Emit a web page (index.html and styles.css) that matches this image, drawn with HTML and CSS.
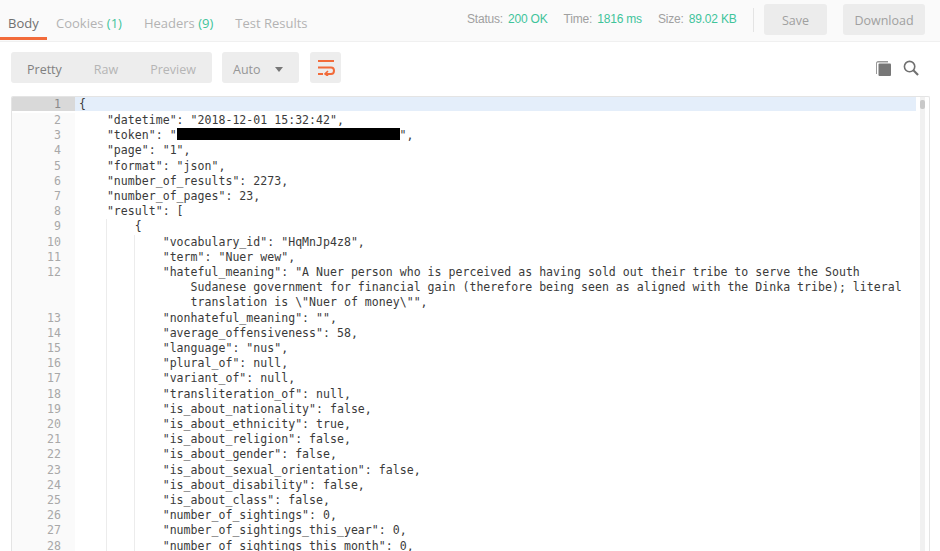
FILE: index.html
```html
<!DOCTYPE html>
<html lang="en">
<head>
<meta charset="utf-8">
<title>Response</title>
<link rel="stylesheet" href="styles.css">
</head>
<body>
<div class="page">
  <header class="topbar">
    <nav class="tabs">
      <span class="tab active">Body</span>
      <span class="tab">Cookies <em>(1)</em></span>
      <span class="tab">Headers <em>(9)</em></span>
      <span class="tab">Test Results</span>
    </nav>
    <div class="meta">
      <span class="stat">Status: <b>200 OK</b></span>
      <span class="stat">Time: <b>1816 ms</b></span>
      <span class="stat">Size: <b>89.02 KB</b></span>
      <span class="divider"></span>
      <button class="btn save">Save</button>
      <button class="btn download">Download</button>
    </div>
  </header>
  <section class="toolbar">
    <div class="group">
      <span class="mode on">Pretty</span>
      <span class="mode">Raw</span>
      <span class="mode">Preview</span>
    </div>
    <div class="select"><span>Auto</span><i class="caret"></i></div>
    <div class="wrap">
      <svg width="18" height="17" viewBox="0 0 18 17" fill="none" stroke="#f26b3a" stroke-width="2">
        <path d="M1 2H17"/>
        <path d="M1 8.500H14C18 8.500 18 15 14 15H8"/>
        <path d="M1 15H6"/>
        <path d="M11 12L8 15L11 17" stroke-width="1.600"/>
      </svg>
    </div>
    <div class="tools">
      <svg width="17" height="17" viewBox="0 0 17 17">
        <path d="M3 1H13V2.500H3C2.500 2.500 2 3 2 3.500V14H1V3C1 2 2 1 3 1Z" fill="#9a9a9a"/>
        <rect x="3.500" y="3.500" width="12.500" height="12.500" rx="1" fill="#777"/>
      </svg>
      <svg width="16" height="16" viewBox="0 0 17 17" fill="none" stroke="#707070" stroke-width="1.700">
        <circle cx="7" cy="7" r="5.500"/>
        <path d="M11 11L16 16" stroke-width="2.200"/>
      </svg>
    </div>
  </section>
  <section class="editor">
    <div class="rows">
      <div class="row current"><span class="num">1</span><pre class="code">{</pre></div>
      <div class="row"><span class="num">2</span><pre class="code">    "datetime": "2018-12-01 15:32:42",</pre></div>
      <div class="row"><span class="num">3</span><pre class="code">    "token": "<span class="redact">xxxxxxxxxxxxxxxxxxxxxxxxxxxxxxxx</span>",</pre></div>
      <div class="row"><span class="num">4</span><pre class="code">    "page": "1",</pre></div>
      <div class="row"><span class="num">5</span><pre class="code">    "format": "json",</pre></div>
      <div class="row"><span class="num">6</span><pre class="code">    "number_of_results": 2273,</pre></div>
      <div class="row"><span class="num">7</span><pre class="code">    "number_of_pages": 23,</pre></div>
      <div class="row"><span class="num">8</span><pre class="code">    "result": [</pre></div>
      <div class="row"><span class="num">9</span><pre class="code g1">        {</pre></div>
      <div class="row"><span class="num">10</span><pre class="code g2">            "vocabulary_id": "HqMnJp4z8",</pre></div>
      <div class="row"><span class="num">11</span><pre class="code g2">            "term": "Nuer wew",</pre></div>
      <div class="row"><span class="num">12</span><pre class="code g2">            "hateful_meaning": "A Nuer person who is perceived as having sold out their tribe to serve the South
                Sudanese government for financial gain (therefore being seen as aligned with the Dinka tribe); literal
                translation is \"Nuer of money\"",</pre></div>
      <div class="row"><span class="num">13</span><pre class="code g2">            "nonhateful_meaning": "",</pre></div>
      <div class="row"><span class="num">14</span><pre class="code g2">            "average_offensiveness": 58,</pre></div>
      <div class="row"><span class="num">15</span><pre class="code g2">            "language": "nus",</pre></div>
      <div class="row"><span class="num">16</span><pre class="code g2">            "plural_of": null,</pre></div>
      <div class="row"><span class="num">17</span><pre class="code g2">            "variant_of": null,</pre></div>
      <div class="row"><span class="num">18</span><pre class="code g2">            "transliteration_of": null,</pre></div>
      <div class="row"><span class="num">19</span><pre class="code g2">            "is_about_nationality": false,</pre></div>
      <div class="row"><span class="num">20</span><pre class="code g2">            "is_about_ethnicity": true,</pre></div>
      <div class="row"><span class="num">21</span><pre class="code g2">            "is_about_religion": false,</pre></div>
      <div class="row"><span class="num">22</span><pre class="code g2">            "is_about_gender": false,</pre></div>
      <div class="row"><span class="num">23</span><pre class="code g2">            "is_about_sexual_orientation": false,</pre></div>
      <div class="row"><span class="num">24</span><pre class="code g2">            "is_about_disability": false,</pre></div>
      <div class="row"><span class="num">25</span><pre class="code g2">            "is_about_class": false,</pre></div>
      <div class="row"><span class="num">26</span><pre class="code g2">            "number_of_sightings": 0,</pre></div>
      <div class="row"><span class="num">27</span><pre class="code g2">            "number_of_sightings_this_year": 0,</pre></div>
      <div class="row"><span class="num">28</span><pre class="code g2">            "number_of_sightings_this_month": 0,</pre></div>
    </div>
    <div class="scroll"><span class="thumb"></span></div>
  </section>
</div>
</body>
</html>
```
FILE: styles.css
```css
* { box-sizing: border-box; }
html, body { margin: 0; height: 100%; overflow: hidden; background: #fff; }
.page { width: 940px; height: 551px; overflow: hidden; font-family: "Open Sans", sans-serif; color: #808080; }

.topbar { height: 42px; display: flex; justify-content: space-between; background: #fafafa; border-bottom: 1px solid #f0f0f0; }
.tabs { display: flex; align-items: flex-start; }
.tab { height: 40px; padding-top: 15px; font-size: 13px; line-height: 17px; color: #b3b3b3; white-space: nowrap; margin-right: 22px; }
.tab em { font-style: normal; color: #3fc49a; }
.tab.active { color: #707070; width: 47px; padding-left: 8px; margin-right: 9px; border-bottom: 3px solid #f26b3a; }
.meta { display: flex; align-items: flex-start; padding: 4px 15px 0 0; }
.stat { font-family: "Liberation Sans", sans-serif; font-size: 12px; line-height: 31px; color: #a0a0a0; margin-right: 16px; letter-spacing: -0.200px; white-space: nowrap; }
.stat b { font-weight: 400; color: #3fc49a; margin-left: 2px; }
.divider { width: 1px; height: 24px; margin: 4px 10px 0 0.500px; background: #e4e4e4; }
.btn { height: 31px; border: 0; border-radius: 3px; background: #ececec; color: #a0a0a0; font-family: "Open Sans", sans-serif; font-size: 12.500px; padding: 2px 0 0; }
.save { width: 63px; margin-right: 16px; }
.download { width: 82px; }

.toolbar { height: 54px; padding: 10px 21px 0 11px; display: flex; align-items: flex-start; }
.group { width: 201px; height: 31px; display: flex; background: #ededed; border-radius: 3px; padding: 2px 0 0 16px; }
.mode { font-size: 12.500px; line-height: 31px; color: #b5b5b5; margin-right: 32px; }
.mode.on { color: #808080; }
.select { width: 77px; height: 31px; margin-left: 10px; padding: 3px 0 0 11px; background: #ededed; border-radius: 3px; display: flex; align-items: center; font-size: 12.500px; color: #969696; }
.caret { margin-left: 14px; width: 0; height: 0; border-left: 4.500px solid transparent; border-right: 4.500px solid transparent; border-top: 5px solid #777; }
.wrap { width: 31px; height: 31px; margin-left: 11px; background: #ededed; border-radius: 3px; display: flex; align-items: center; justify-content: center; }
.tools { margin-left: auto; display: flex; gap: 11px; padding-top: 8px; }

.editor { margin-left: 11px; width: 919px; height: 460px; display: flex; border: 1px solid #e4e4e4; border-bottom: 0; border-radius: 2px 2px 0 0; overflow: hidden; }
.rows { width: 904px; flex: none; }
.row { display: flex; }
.num { width: 63px; flex: none; padding-right: 14px; text-align: right; background: #fafafa; color: #a8a8a8; font-family: "DejaVu Sans Mono", monospace; font-size: 11.550px; line-height: 15.200px; }
.code { margin: 0; flex: 1; padding-left: 4px; font-family: "DejaVu Sans Mono", monospace; font-size: 11.550px; line-height: 15.200px; letter-spacing: 0.020px; color: #3a3a3a; white-space: pre; }
.current { height: 14.200px; margin-bottom: 1.800px; }
.current .num { background: #d9d9d9; color: #8a8a8a; }
.current .code { background: #e4eefa; }
.g1 { background: linear-gradient(#ececec, #ececec) 31px 0 / 1px 100% no-repeat; }
.g2 { background: linear-gradient(#ececec, #ececec) 31px 0 / 1px 100% no-repeat, linear-gradient(#ececec, #ececec) 59px 0 / 1px 100% no-repeat; }
.redact { background: #000; color: #000; display: inline-block; width: 223px; height: 12px; line-height: 12px; vertical-align: -1px; overflow: hidden; }
.scroll { flex: 1; padding: 3px 0 0 4px; background: linear-gradient(#f1f1f1, #f1f1f1) 4px 0 / 5px 100% no-repeat; }
.thumb { display: block; width: 5px; height: 9px; border-radius: 2px; background: #c8c8c8; }
```
